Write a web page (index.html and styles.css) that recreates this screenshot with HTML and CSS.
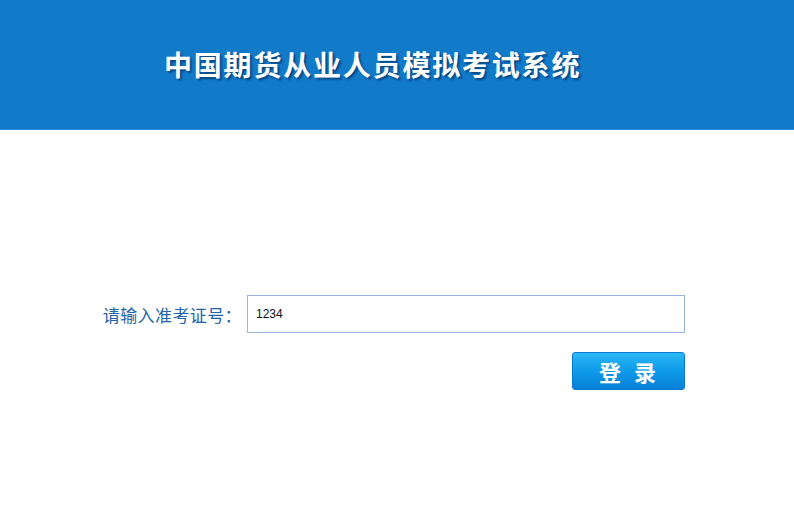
FILE: index.html
```html
<!DOCTYPE html>
<html lang="zh-CN">
<head>
  <meta charset="UTF-8">
  <title>中国期货从业人员模拟考试系统</title>
  <link rel="stylesheet" href="styles.css">
</head>
<body>

<div class="header">
  <h1>中国期货从业人员模拟考试系统</h1>
</div>

<div class="login">
  <form class="login-form">
    <div class="row">
      <label for="ticket">请输入准考证号：</label>
      <input type="text" id="ticket" value="1234">
    </div>
    <div class="row row-btn">
      <button type="submit">登 录</button>
    </div>
  </form>
</div>

</body>
</html>
```

FILE: styles.css
```css
body {
  margin: 0;
  background: #fff;
  font-family: "Microsoft YaHei", "Noto Sans CJK SC", sans-serif;
}

.header {
  height: 130px;
  background: #117ac9;
  border-bottom: 1px solid #2a8ad4;
  box-sizing: border-box;
  display: flex;
  align-items: center;
  padding-left: 164px;
}

.header h1 {
  margin: 0 0 2px 0;
  color: #fff;
  font-size: 28px;
  font-weight: bold;
  letter-spacing: 1.8px;
  text-shadow: 2px 2px 2px rgba(0, 40, 90, 0.6);
}

.login {
  padding-top: 165px;
}

.login-form {
  width: 600px;
  margin-left: 85px;
}

.row {
  display: flex;
  align-items: center;
  justify-content: flex-end;
}

.row label {
  color: #2163a8;
  font-size: 17px;
  letter-spacing: 0.4px;
  margin-right: 5px;
}

.row input {
  width: 438px;
  height: 38px;
  box-sizing: border-box;
  border: 1px solid #95b6e0;
  padding: 0 8px;
  font-family: "Liberation Sans", Arial, sans-serif;
  font-size: 12px;
  color: #111;
  outline: none;
}

.row-btn {
  margin-top: 19px;
}

.row button {
  width: 113px;
  height: 38px;
  border: 1px solid #0a7ad0;
  border-radius: 3px;
  background: linear-gradient(to bottom, #2ab8f5, #0e9ae8 50%, #0880d8);
  color: #fff;
  font-family: "Noto Sans CJK SC", sans-serif;
  font-size: 22px;
  font-weight: bold;
  letter-spacing: 4px;
  padding-left: 8px;
  cursor: pointer;
}
```
